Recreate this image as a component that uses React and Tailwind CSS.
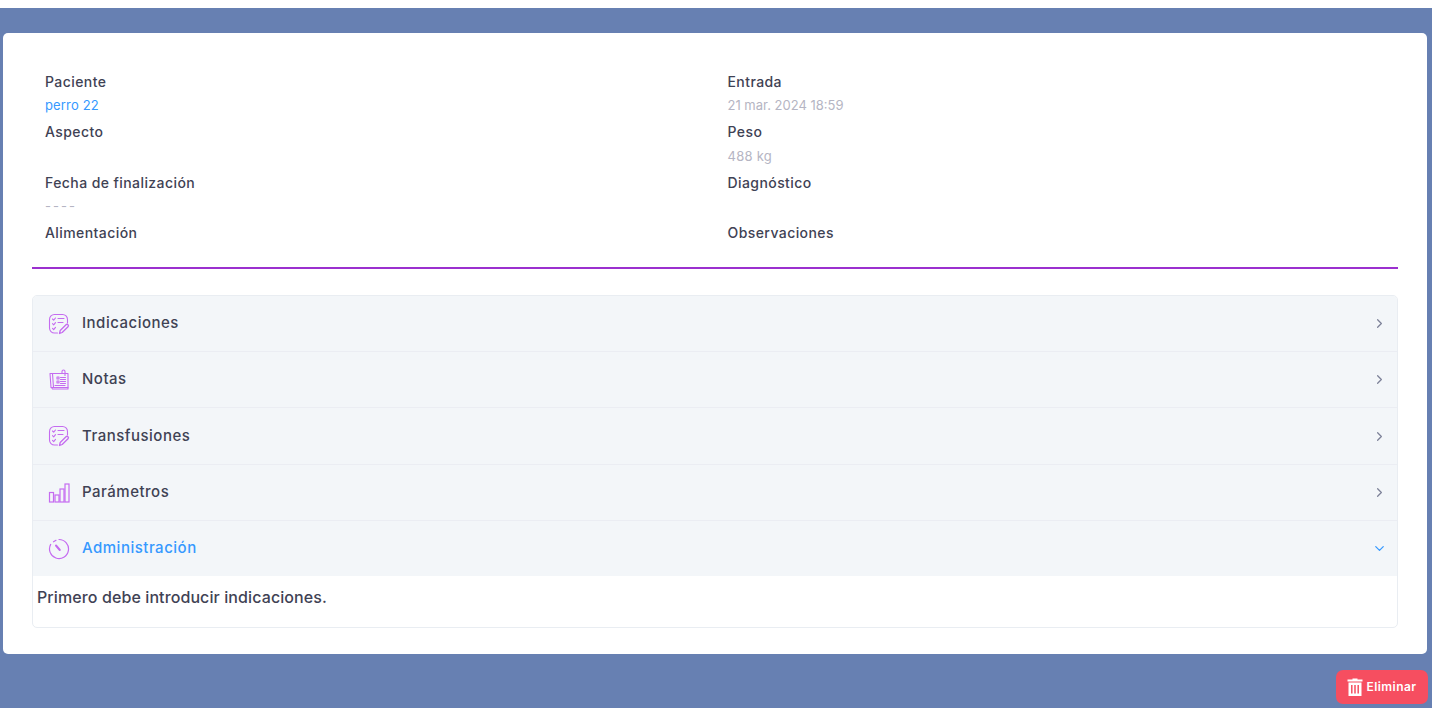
import React from "react";
import { ChevronRight, ChevronDown } from "lucide-react";

const P = "#c56cf0";
const Check = () => (
  <svg width="22" height="22" viewBox="0 0 22 22" fill="none" stroke={P} strokeWidth="1.1" strokeLinecap="round" strokeLinejoin="round">
    <path d="M9.500 20H6.500a5 5 0 0 1-5-5V6.500a5 5 0 0 1 5-5h8a5 5 0 0 1 5 5V10" />
    <path d="M4.500 6l1.200 1.200L7.500 5M4.500 10.700l1.200 1.200 1.800-2.200M4.500 15.400l1.200 1.200 1.800-2.200" />
    <path d="M10 5.500h6M10 9.500h5" />
    <path d="M11.500 20.500l.7-3 5.800-5.800a1.300 1.300 0 0 1 2 2l-5.800 5.800z" strokeWidth="1.300" />
  </svg>
);
const Notes = () => (
  <svg width="22" height="22" viewBox="0 0 22 22" fill="none" stroke={P} strokeWidth="1.1" strokeLinecap="round" strokeLinejoin="round">
    <path d="M2 4.500h2.500l1 14H3z" />
    <path d="M4.500 4.500h15.500v14H5.500" />
    <path d="M3.500 18.500l1 1.500h15.500v-1.500" />
    <path d="M14 4.500V2.500a1.500 1.500 0 0 1 3 0v4" />
    <path d="M9 8h2v2H9zM9 12h2v2H9zM12.500 8.500h5M12.500 10.500h5M12.500 12.500h5M12.500 14.500h5M7 16.500h10" />
  </svg>
);
const Bars = () => (
  <svg width="22" height="20" viewBox="0 0 22 20" fill="none" stroke={P} strokeWidth="1.200">
    <rect x="1.500" y="9.500" width="4" height="9.500" />
    <rect x="7" y="12" width="4" height="7" />
    <rect x="12" y="6" width="4" height="13" />
    <rect x="17" y="1" width="4" height="18" />
  </svg>
);
const Clock = () => (
  <svg width="22" height="22" viewBox="0 0 22 22" fill="none" stroke={P} strokeWidth="1.200" strokeLinecap="round">
    <path d="M11 1.500a9.500 9.500 0 1 1-8.300 4.900" />
    <path d="M5.500 3.800L8 2.300" />
    <path d="M8 7.500l3.800 4.500" strokeWidth="2" />
  </svg>
);
const Trash = () => (
  <svg width="16" height="18" viewBox="0 0 16 18" fill="none" className="shrink-0">
    <path d="M5.500 1.500V.5h5v1H15.500v2H.5v-2z" fill="#fff" />
    <path d="M1.500 4.500h13V18h-13z" fill="#fff" />
    <path d="M4.800 7v8.500M8 7v8.500M11.200 7v8.500" stroke="#f64e60" strokeWidth="1.500" />
  </svg>
);

const rows = [
  [["Paciente", "perro 22", "text-[#3699ff] tracking-[0.15px]"], ["Entrada", "21 mar. 2024 18:59", "text-[#b5b5c3] tracking-[0px]"]],
  [["Aspecto", "", ""], ["Peso", "488 kg", "text-[#b5b5c3] tracking-[0.25px] mt-[4px]"]],
  [["Fecha de finalización", "----", "text-[#b5b5c3] tracking-[2px]"], ["Diagnóstico", "", ""]],
  [["Alimentación", "", ""], ["Observaciones", "", ""]],
];

const heights = ["h-[50px]", "h-[51px]", "h-[50px]", "h-[24px]"];

const Field = ({ f, h }) => (
  <div className={`flex flex-col ${h}`}>
    <div className="text-[14px] leading-[21px] tracking-[0.42px] font-medium text-[#3f4254]">{f[0]}</div>
    {f[1] ? <div className={`mt-[3px] text-[13px] leading-[20px] ${f[2]}`}>{f[1]}</div> : null}
  </div>
);

const items = [
  ["Indicaciones", Check, "h-[56px]"],
  ["Notas", Notes, "h-[56px]"],
  ["Transfusiones", Check, "h-[57px]"],
  ["Parámetros", Bars, "h-[56px]"],
];

export default function App() {
  return (
    <div className="h-[708px] bg-white pt-2 overflow-hidden" style={{ fontFamily: "Inter, sans-serif" }}>
      <div className="h-[700px] bg-[#6780b2] pt-[25px] pr-[5px] pl-[3px] flex flex-col">
        <div className="h-[621px] bg-white rounded-[5px] pt-[38px] px-[29px]">
          <div className="px-[13px] grid grid-cols-[682.5px_1fr]">
            {rows.map((r, i) => (
              <React.Fragment key={i}>
                <Field f={r[0]} h={heights[i]} />
                <Field f={r[1]} h={heights[i]} />
              </React.Fragment>
            ))}
          </div>
          <div className="h-[2px] bg-[#9b30cf] mt-[21px]" />
          <div className="mt-[26px] h-[333px] border border-[#e9edf2] rounded-[5px] overflow-hidden">
            {items.map(([t, Ic, h]) => (
              <div key={t} className={`${h} bg-[#f3f6f9] border-b border-[#ebedf3] flex items-center pl-[15px] pr-[10px]`}>
                <div className="w-[34px] flex items-center"><Ic /></div>
                <div className="flex-1 text-[15px] tracking-[0.5px] font-medium text-[#3f4254]">{t}</div>
                <ChevronRight size={15} strokeWidth={2} className="text-[#7e8299]" />
              </div>
            ))}
            <div className="h-[55px] bg-[#f3f6f9] flex items-center pl-[15px] pr-[10px]">
              <div className="w-[34px] flex items-center"><Clock /></div>
              <div className="flex-1 text-[15px] tracking-[0.5px] font-medium text-[#3699ff]">Administración</div>
              <ChevronDown size={15} strokeWidth={2} className="text-[#3699ff]" />
            </div>
            <div className="pl-[4px] pt-[9px] text-[16px] leading-[24px] tracking-[0.1px] font-[450] text-[#3f4254]">Primero debe introducir indicaciones.</div>
          </div>
        </div>
        <div className="flex justify-end mt-[16px]">
          <div className="h-[34px] w-[92px] mr-[-1px] rounded-[7px] bg-[#f64e60] flex items-center justify-center gap-[3px] text-white text-[12px] font-semibold tracking-[0.45px]">
            <Trash />
            <span>Eliminar</span>
          </div>
        </div>
      </div>
    </div>
  );
}
